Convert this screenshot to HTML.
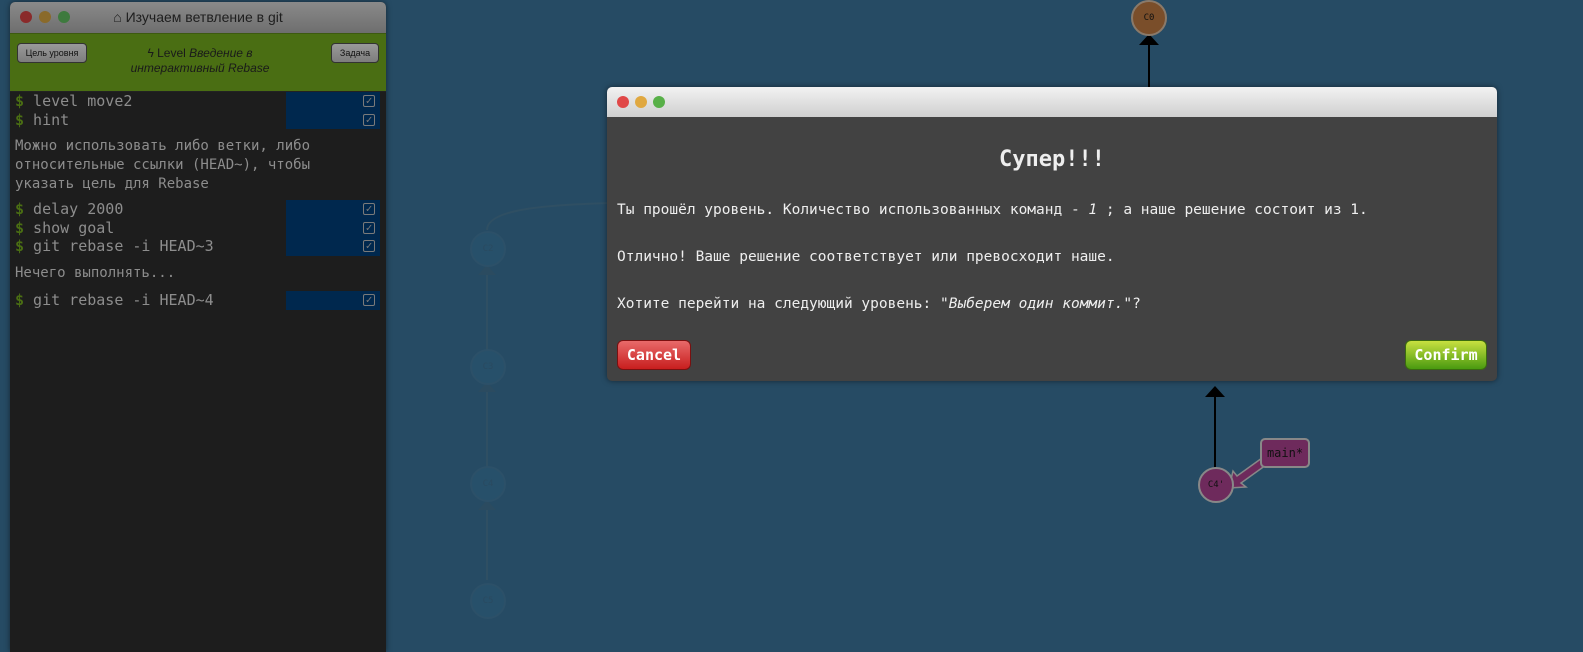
<!DOCTYPE html><html><head><meta charset="utf-8"><style>
body{margin:0;width:1583px;height:644px;background:#264b64;position:relative;overflow:hidden;font-family:"Liberation Sans","DejaVu Sans",sans-serif}
.p{position:absolute;left:10px;top:2px;width:376px;height:650px;background:#1d1d1d;border-radius:5px 5px 0 0;box-shadow:0 0 6px rgba(0,0,0,.5);overflow:hidden}
.tb{height:31px;background:linear-gradient(#8a8a8a,#6e6e6e);color:#1e1e1e;font-size:14px;text-align:center;line-height:31px;position:relative}
.dots{position:absolute;left:10px;top:9px;line-height:0}
.dots i{display:inline-block;width:12px;height:12px;border-radius:50%;margin-right:7px}
.gr{height:57px;background:#4a6e13;position:relative;border-top:1px solid #3d5a10;border-bottom:1px solid #222}
.btn{position:absolute;top:9px;height:18px;border:1px solid #333;border-radius:4px;background:linear-gradient(#9a9a9a,#7d7d7d);font-size:9px;color:#111;line-height:18px;text-align:center}
.lv{position:absolute;left:95px;width:190px;top:12px;text-align:center;font-size:12px;color:#1a1a1a;line-height:15px}
.c{font-family:"DejaVu Sans Mono","Liberation Mono",monospace;font-size:15px;color:#8d8d8d;padding:0 5px;position:relative}
.l{height:18.5px;line-height:18.5px;position:relative}
.d{color:#4a6e13;font-weight:bold}
.bl{position:absolute;left:276px;width:94px;background:#00284e}
.ck{position:absolute;right:6px;width:10px;height:10px;border:1.5px solid #7a7a7a;border-radius:2px;font-size:11px;line-height:9px;text-align:center;color:#7a7a7a;font-weight:bold}
.t{line-height:19px;margin:8px 0 6px;font-size:14px;padding-right:45px}
.dlg{position:absolute;left:607px;top:87px;width:890px;height:294px;background:#424242;border-radius:5px;box-shadow:0 0 6px rgba(0,0,0,.5);font-family:"DejaVu Sans Mono","Liberation Mono",monospace;color:#eee;font-size:14.5px}
.dtb{height:30px;background:linear-gradient(#f2f2f2,#cfcfcf);border-radius:5px 5px 0 0;position:relative}
.dlg p{position:absolute;left:10px;margin:0}
.b2{position:absolute;top:253px;height:28px;border-radius:6px;font-weight:bold;font-size:15px;line-height:28px;text-align:center;color:#fff}
.node{position:absolute;border-radius:50%;text-align:center;font-family:"DejaVu Sans Mono",monospace;font-size:9px}
</style></head><body>
<svg style="position:absolute;left:0;top:0" width="1583" height="644">
<g stroke="#2f4f63" stroke-width="2" fill="none"><path d="M487 580V400M487 460V270M487 230C487 210 540 205 610 203"/></g>
<g fill="#2b4b60"><path d="M478 392h18l-9-10zM478 275h18l-9-10zM478 510h18l-9-10z"/></g>
<path d="M1149 87V40" stroke="#000" stroke-width="2"/><path d="M1139 45h20l-10-11z" fill="#000"/>
<path d="M1215 467V393" stroke="#000" stroke-width="2"/><path d="M1205 397h20l-10-11z" fill="#000"/>
<path d="M1262 458L1237 476l-4-5-4 17 17-1-5-4 25-18z" fill="#6e2a5c" stroke="#888" stroke-width="1.5"/>
</svg>
<div class="node" style="left:1131px;top:0;width:32px;height:32px;background:#7a4e2a;border:2px solid #8a7a6a;line-height:32px;color:#111">C0</div>
<div class="node" style="left:1198px;top:467px;width:32px;height:32px;background:#6e2a5c;border:2px solid #888;line-height:32px;color:#111">C4'</div>
<div style="position:absolute;left:1260px;top:438px;width:46px;height:26px;background:#6e2a5c;border:2px solid #888;border-radius:5px;font-family:'DejaVu Sans Mono',monospace;font-size:12px;line-height:26px;text-align:center;color:#111">main*</div>
<div class="node" style="left:470px;top:231px;width:32px;height:32px;border:2px solid #2c5068;background:#27506a;line-height:32px;color:#2a4a60">C2</div>
<div class="node" style="left:470px;top:349px;width:32px;height:32px;border:2px solid #2c5068;background:#27506a;line-height:32px;color:#2a4a60">C3</div>
<div class="node" style="left:470px;top:466px;width:32px;height:32px;border:2px solid #2c5068;background:#27506a;line-height:32px;color:#2a4a60">C4</div>
<div class="node" style="left:470px;top:583px;width:32px;height:32px;border:2px solid #2c5068;background:#27506a;line-height:32px;color:#2a4a60">C5</div>

<div class="p">
<div class="tb"><div class="dots"><i style="background:#8a2a2a"></i><i style="background:#8a6a2a"></i><i style="background:#3e7a3e"></i></div>&#8962; Изучаем ветвление в git</div>
<div class="gr"><div class="btn" style="left:7px;width:68px">Цель уровня</div><div class="lv">ϟ Level <i>Введение в интерактивный Rebase</i></div><div class="btn" style="right:7px;width:46px">Задача</div></div>
<div class="c">
<div class="bl" style="top:0;height:37px"></div>
<div class="l"><span class="d">$</span> level move2<span class="ck" style="top:3px">✓</span></div>
<div class="l"><span class="d">$</span> hint<span class="ck" style="top:3px">✓</span></div>
<div class="t">Можно использовать либо ветки, либо относительные ссылки (HEAD~), чтобы указать цель для Rebase</div>
<div style="position:relative"><div class="bl" style="top:0;height:56px;left:271px"></div>
<div class="l"><span class="d">$</span> delay 2000<span class="ck" style="top:3px">✓</span></div>
<div class="l"><span class="d">$</span> show goal<span class="ck" style="top:3px">✓</span></div>
<div class="l"><span class="d">$</span> git rebase -i HEAD~3<span class="ck" style="top:3px">✓</span></div></div>
<div class="t" style="margin:8px 0">Нечего выполнять...</div>
<div style="position:relative"><div class="bl" style="top:0;height:19px;left:271px"></div>
<div class="l"><span class="d">$</span> git rebase -i HEAD~4<span class="ck" style="top:3px">✓</span></div></div>
</div></div>

<div class="dlg">
<div class="dtb"><div style="position:absolute;left:10px;top:9px;line-height:0"><i style="display:inline-block;width:12px;height:12px;border-radius:50%;margin-right:6px;background:#e04848"></i><i style="display:inline-block;width:12px;height:12px;border-radius:50%;margin-right:6px;background:#e0a840"></i><i style="display:inline-block;width:12px;height:12px;border-radius:50%;background:#58b048"></i></div></div>
<div style="position:absolute;top:60px;width:100%;text-align:center;font-size:22px;font-weight:bold">Супер!!!</div>
<p style="top:115px">Ты прошёл уровень. Количество использованных команд - <i>1</i> ; а наше решение состоит из 1.</p>
<p style="top:162px">Отлично! Ваше решение соответствует или превосходит наше.</p>
<p style="top:209px">Хотите перейти на следующий уровень: <i>"Выберем один коммит."</i>?</p>
<div class="b2" style="left:10px;width:72px;background:linear-gradient(#e86a6a,#c81e1e);border:1px solid #7a1010">Cancel</div>
<div class="b2" style="right:10px;width:80px;background:linear-gradient(#c8e040,#4a9a10);border:1px solid #3a6a10">Confirm</div>
</div>
</body></html>
